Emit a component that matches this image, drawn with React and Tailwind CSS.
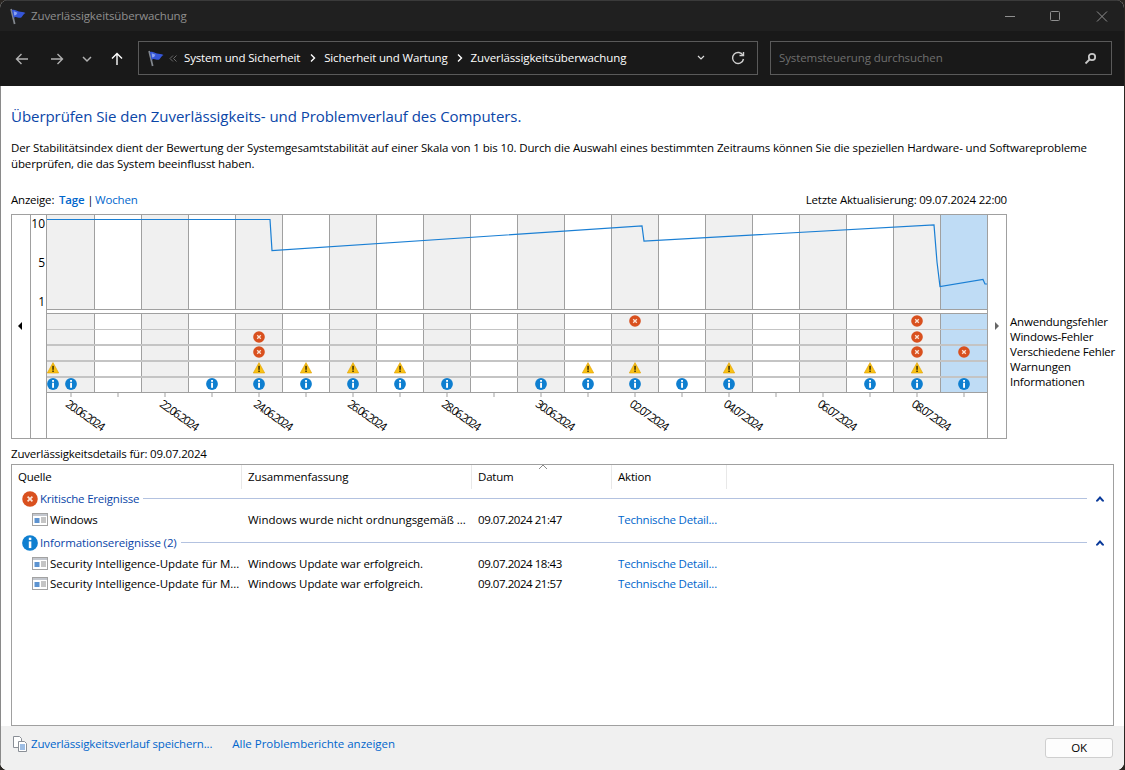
import React from "react";

const F = { fontFamily: '"Open Sans","Noto Sans",sans-serif' };

function Flag({ size = 18 }) {
  return (
    <svg width={size} height={size} viewBox="0 0 18 18" className="shrink-0">
      <path d="M2.2 1 L6 17" stroke="#83888f" strokeWidth="1.8" fill="none" />
      <path d="M3 2.2 C6 1 8 3 10.5 3.8 C13 4.4 15 3.8 17.5 5.2 C15.5 6.2 14.5 8 13 10 C10.5 11 8.5 9 6.5 9.5 L5 10.5 Z" fill="#3556d8" />
      <path d="M5 3.5 L9 5 L7.5 7.5 L5.5 8 Z" fill="#8aa2f2" />
    </svg>
  );
}

function Err({ size = 12 }) {
  return (
    <svg width={size} height={size} viewBox="0 0 12 12" className="block shrink-0">
      <circle cx="6" cy="6" r="5.8" fill="#d9501e" />
      <path d="M4.2 4.2 L7.8 7.8 M7.8 4.2 L4.2 7.8" stroke="#fbe3d6" strokeWidth="1.3" />
    </svg>
  );
}
function Warn() {
  return (
    <svg width="12" height="12" viewBox="0 0 12 12" className="block">
      <path d="M6 .6 L11.7 11 L.3 11 Z" fill="#f9c215" stroke="#e0a000" strokeWidth=".6" strokeLinejoin="round" />
      <rect x="5.3" y="3.8" width="1.5" height="4" fill="#3a2c00" />
      <rect x="5.3" y="8.5" width="1.5" height="1.5" fill="#3a2c00" />
    </svg>
  );
}
function Info({ size = 12 }) {
  return (
    <svg width={size} height={size} viewBox="0 0 12 12" className="block shrink-0">
      <circle cx="6" cy="6" r="5.9" fill="#0f7fd0" />
      <rect x="5.1" y="4.8" width="1.9" height="5" fill="#fff" />
      <rect x="5.1" y="2" width="1.9" height="1.8" fill="#fff" />
    </svg>
  );
}
function RowIcon() {
  return (
    <svg width="16" height="13" viewBox="0 0 16 13" className="block shrink-0">
      <rect x=".5" y=".5" width="15" height="12" fill="#fff" stroke="#a2a2a2" />
      <rect x="1" y="1" width="14" height="2" fill="#c3c7ce" />
      <rect x="2.5" y="5" width="5" height="5" fill="#5d93d0" />
      <path d="M9 5h5M9 7h5M9 9h5" stroke="#8a8a8a" />
    </svg>
  );
}

const COLS = Array.from({ length: 20 }, (_, i) => i);
const err1 = [12, 18];
const err2 = [4, 18];
const err3 = [4, 18, 19];
const warn = [4, 5, 6, 7, 11, 12, 14, 17, 18];
const info = [0, 3, 4, 5, 6, 7, 8, 10, 11, 12, 13, 14, 17, 18, 19];
const dates = [
  [0, "20.06.2024"], [2, "22.06.2024"], [4, "24.06.2024"], [6, "26.06.2024"], [8, "28.06.2024"],
  [10, "30.06.2024"], [12, "02.07.2024"], [14, "04.07.2024"], [16, "06.07.2024"], [18, "08.07.2024"],
];

function colBg(i) {
  if (i === 19) return "bg-[#bfdcf5]";
  return i % 2 === 0 ? "bg-[#f0f0f0]" : "bg-white";
}
function colW(i) {
  if (i === 0) return "w-[48px] border-r border-[#a0a0a0]";
  if (i === 19) return "w-[46px]";
  return "w-[47px] border-r border-[#a0a0a0]";
}

function MarkRow({ cols, Icon, extra }) {
  return (
    <div className="flex h-[15.75px] relative">
      {COLS.map((i) => (
        <div key={i} className="w-[47px] flex items-center justify-center">
          {cols.includes(i) ? <Icon /> : null}
        </div>
      ))}
      {extra ? <div className="absolute left-0 top-1/2 -translate-y-1/2"><Icon /></div> : null}
    </div>
  );
}

function Chart() {
  return (
    <div className="ml-[11px] w-[996px] shrink-0 h-[225px] border border-[#a0a0a0] flex text-black">
      <div className="w-[19px] border-r border-[#a0a0a0] flex items-center justify-center pr-[3px] pb-[2px] shrink-0">
        <span className="w-0 h-0 border-y-[4px] border-y-transparent border-r-[4px] border-r-black" />
      </div>
      <div className="w-[16px] shrink-0 border-r border-[#a0a0a0] flex flex-col items-end pr-[1px] pt-[1px] text-[12px] leading-[16px] tracking-normal">
        <div className="h-[39px]">10</div>
        <div className="h-[39px]">5</div>
        <div>1</div>
      </div>
      <div className="w-[940px] shrink-0 relative flex flex-col">
        <div className="flex h-[95px] border-b border-[#a0a0a0]">
          {COLS.map((i) => (
            <div key={i} className={`${colW(i)} ${colBg(i)}`} />
          ))}
        </div>
        <svg className="absolute left-0 top-0" width="940" height="94" viewBox="0 0 940 94">
          <polyline
            fill="none"
            stroke="#1a7fd4"
            strokeWidth="1.2"
            points="0,4.5 223,4.5 225,35.5 595,11 597,26 887,10 890,47 893,71.5 936,64.5 938,69 940,69"
          />
        </svg>
        <div className="h-[3px]" />
        <div className="relative h-[80px] border-y border-[#a0a0a0]">
          <div className="absolute inset-0 flex">
            {COLS.map((i) => (
              <div key={i} className={`h-full ${colW(i)} ${colBg(i)}`} />
            ))}
          </div>
          <div className="absolute inset-0 flex flex-col">
            <div className="h-[16px] border-b border-[#c4c4c4]" />
            <div className="h-[16px] border-b-2 border-[#c4c4c4]" />
            <div className="h-[16px] border-b-2 border-[#c4c4c4]" />
            <div className="h-[16px] border-b-2 border-[#c4c4c4]" />
          </div>
          <div className="relative flex flex-col -mt-[1px]">
            <MarkRow cols={err1} Icon={Err} />
            <MarkRow cols={err2} Icon={Err} />
            <MarkRow cols={err3} Icon={Err} />
            <MarkRow cols={warn} Icon={Warn} extra />
            <MarkRow cols={info} Icon={Info} extra />
          </div>
        </div>
        <div className="flex h-[4px]">
          {COLS.map((i) => (
            <div key={i} className="w-[47px] flex justify-center">
              <div className="w-[2px] h-full bg-[#d0d0d0]" />
            </div>
          ))}
        </div>
        <div className="flex flex-1">
          {COLS.map((i) => {
            const d = dates.find((x) => x[0] === i);
            return (
              <div key={i} className="w-[47px] h-[30px] flex justify-center pt-[11px]">
                {d ? (
                  <span className="block whitespace-nowrap rotate-[35deg] translate-x-[14px] tracking-[-1.5px] text-[11.5px] leading-[14px] h-[14px]">
                    {d[1]}
                  </span>
                ) : null}
              </div>
            );
          })}
        </div>
      </div>
      <div className="w-[19px] shrink-0 border-l border-[#a0a0a0] flex items-center justify-center pb-[2px]">
        <span className="w-0 h-0 border-y-[4px] border-y-transparent border-l-[4px] border-l-[#666]" />
      </div>
    </div>
  );
}

function Chevron() {
  return (
    <svg width="8" height="6" viewBox="0 0 8 6" className="mr-[9px] shrink-0" fill="#0a3a9a">
      <path d="M4 0L8 4.5V5.5H6.2L4 3L1.8 5.5H0V4.5Z" />
    </svg>
  );
}

export default function App() {
  return (
    <div className="w-[1125px] h-[770px] bg-[#2a2622] overflow-hidden text-[11.5px] tracking-[-0.2px]" style={F}>
      <div className="w-[1124px] h-[770px] rounded-[8px] overflow-hidden flex flex-col bg-white relative">
        <div className="h-[31px] bg-[#202020] shrink-0 flex items-center pl-[9px] text-[#8f8f8f] border-t border-[#3a3a3a]">
          <Flag size={17} />
          <span className="ml-[5px] tracking-[-0.1px]">Zuverlässigkeitsüberwachung</span>
          <div className="ml-auto flex items-center">
            <svg width="46" height="30" viewBox="0 0 46 30"><path d="M19 15.5h10" stroke="#8f8f8f" /></svg>
            <svg width="46" height="30" viewBox="0 0 46 30"><rect x="18.5" y="10.5" width="9" height="9" rx="1" fill="none" stroke="#8f8f8f" /></svg>
            <svg width="46" height="30" viewBox="0 0 46 30"><path d="M19 10.5l10 10M29 10.5l-10 10" stroke="#8f8f8f" /></svg>
          </div>
        </div>
        <div className="h-[55px] bg-[#191919] shrink-0 flex items-center text-white">
          <div className="w-[138px] shrink-0 flex items-center h-full">
            <svg className="ml-[15px]" width="14" height="14" viewBox="0 0 14 14" fill="none" stroke="#b0b0b0" strokeWidth="1.4"><path d="M13 7H1.5M6.5 2l-5 5 5 5" /></svg>
            <svg className="ml-[21px]" width="14" height="14" viewBox="0 0 14 14" fill="none" stroke="#b0b0b0" strokeWidth="1.4"><path d="M1 7h11.5M7.5 2l5 5-5 5" /></svg>
            <svg className="ml-[18px]" width="10" height="10" viewBox="0 0 10 10" fill="none" stroke="#b0b0b0" strokeWidth="1.5"><path d="M1 3l4 4 4-4" /></svg>
            <svg className="ml-[18px]" width="14" height="14" viewBox="0 0 14 14" fill="none" stroke="#fff" strokeWidth="1.4"><path d="M7 13V1.5M2 6.5l5-5 5 5" /></svg>
          </div>
          <div className="w-[620px] h-[34px] border border-[#5a5a5a] flex items-center pl-[8px] shrink-0 mb-[1px]">
            <Flag size={17} />
            <svg className="ml-[5px] mr-[7px]" width="8" height="7" viewBox="0 0 8 7" fill="none" stroke="#6a6a6a"><path d="M4 .5L1 3.5l3 3M7.5 .5l-3 3 3 3" /></svg>
            <span className="font-medium tracking-[-0.15px]">System und Sicherheit</span>
            <svg className="ml-[10px] mr-[8px]" width="6" height="8" viewBox="0 0 6 8" fill="none" stroke="#fff" strokeWidth="1.4"><path d="M1 .5L4.5 4 1 7.5" /></svg>
            <span className="font-medium tracking-[-0.15px]">Sicherheit und Wartung</span>
            <svg className="ml-[9px] mr-[8px]" width="6" height="8" viewBox="0 0 6 8" fill="none" stroke="#fff" strokeWidth="1.4"><path d="M1 .5L4.5 4 1 7.5" /></svg>
            <span className="font-medium tracking-[-0.1px]">Zuverlässigkeitsüberwachung</span>
            <svg className="ml-auto" width="8" height="6" viewBox="0 0 8 6" fill="none" stroke="#ddd" strokeWidth="1.2"><path d="M1 1l3 3 3-3" /></svg>
            <svg className="ml-[26px] mr-[12px]" width="14" height="14" viewBox="0 0 14 14" fill="none" stroke="#d0d0d0" strokeWidth="1.4"><path d="M12 4.5A5.5 5.5 0 1 0 12.5 8" /><path d="M8.5 4.5H12.5V1" /></svg>
          </div>
          <div className="w-[342px] h-[34px] border border-[#5a5a5a] flex items-center pl-[8px] pr-[14px] ml-[12px] text-[#6f6f6f] mb-[1px] tracking-[-0.1px]">
            <span>Systemsteuerung durchsuchen</span>
            <svg className="ml-auto" width="13" height="13" viewBox="0 0 13 13" fill="none" stroke="#c8c8c8" strokeWidth="1.8"><circle cx="8" cy="5" r="3.2" /><path d="M5.5 7.5L1.5 11.5" /></svg>
          </div>
        </div>

        <div className="flex-1 bg-white flex flex-col min-h-0 border-l border-[#8a8a8a]">
          <div className="text-[15px] leading-[20px] tracking-[-0.05px] text-[#0a46a8] pl-[10px] pt-[20px] h-[50px] shrink-0">
            Überprüfen Sie den Zuverlässigkeits- und Problemverlauf des Computers.
          </div>
          <p className="leading-[16px] tracking-[-0.13px] text-black pl-[10px] pr-[30px] pt-[4px] h-[53px] shrink-0">
            Der Stabilitätsindex dient der Bewertung der Systemgesamtstabilität auf einer Skala von 1 bis 10. Durch die Auswahl eines bestimmten Zeitraums können Sie die speziellen Hardware- und Softwareprobleme überprüfen, die das System beeinflusst haben.
          </p>
          <div className="flex items-start justify-between pl-[10px] pt-[3px] w-[1006px] leading-[16px] h-[25px] shrink-0 text-black">
            <div>
              Anzeige: <span className="font-semibold text-[#0066cc] ml-[2px]">Tage</span> | <span className="text-[#0066cc] -ml-[1px]">Wochen</span>
            </div>
            <div>Letzte Aktualisierung: 09.07.2024 22:00</div>
          </div>
          <div className="flex -ml-px shrink-0">
            <Chart />
            <div className="ml-[3px] mt-[100px] leading-[15px] text-black whitespace-nowrap">
              <div>Anwendungsfehler</div>
              <div>Windows-Fehler</div>
              <div>Verschiedene Fehler</div>
              <div>Warnungen</div>
              <div>Informationen</div>
            </div>
          </div>
          <div className="leading-[16px] pl-[10px] pt-[7px] h-[25px] shrink-0 text-black">
            Zuverlässigkeitsdetails für: 09.07.2024
          </div>
          <div className="ml-[10px] w-[1103px] flex-1 border border-[#a0a0a0] text-black flex flex-col min-h-0">
            <div className="flex h-[24px] items-center shrink-0">
              <div className="w-[230px] pl-[6px] h-full flex items-center border-r border-[#e8e8e8]">Quelle</div>
              <div className="w-[230px] pl-[6px] h-full flex items-center border-r border-[#e8e8e8] tracking-[-0.1px]">Zusammenfassung</div>
              <div className="w-[140px] pl-[6px] h-full flex items-center border-r border-[#e8e8e8] relative">
                Datum
                <svg className="absolute left-[66px] -top-[1px]" width="10" height="6" viewBox="0 0 10 6" fill="none" stroke="#8a8a8a"><path d="M1 5l4-4 4 4" /></svg>
              </div>
              <div className="w-[115px] pl-[6px] h-full flex items-center border-r border-[#e8e8e8]">Aktion</div>
            </div>
            <div className="flex items-center h-[19px] pl-[10px] shrink-0">
              <Err size={16} />
              <span className="ml-[2px] text-[#0a46a8]">Kritische Ereignisse</span>
              <div className="h-px bg-[#b3c2e0] flex-1 ml-[4px] mr-[9px]" />
              <Chevron />
            </div>
            <div className="flex items-center h-[21px] mt-[1px] shrink-0">
              <div className="w-[230px] flex items-center pl-[20px]"><RowIcon /><span className="ml-[2px]">Windows</span></div>
              <div className="w-[230px] pl-[6px] whitespace-nowrap tracking-[-0.04px]">Windows wurde nicht ordnungsgemäß ...</div>
              <div className="w-[140px] pl-[6px] tracking-[-0.45px]">09.07.2024 21:47</div>
              <div className="pl-[6px] text-[#0066cc]">Technische Detail...</div>
            </div>
            <div className="flex items-center h-[19px] mt-[3px] pl-[10px] mb-[1px] shrink-0">
              <Info size={16} />
              <span className="ml-[2px] text-[#0a46a8] tracking-[-0.12px]">Informationsereignisse (2)</span>
              <div className="h-px bg-[#b3c2e0] flex-1 ml-[4px] mr-[9px]" />
              <Chevron />
            </div>
            {["18:43", "21:57"].map((t) => (
              <div key={t} className="flex items-center h-[20.5px] shrink-0">
                <div className="w-[230px] flex items-center pl-[20px]"><RowIcon /><span className="ml-[2px] whitespace-nowrap tracking-[-0.05px]">Security Intelligence-Update für M...</span></div>
                <div className="w-[230px] pl-[6px] tracking-[-0.1px]">Windows Update war erfolgreich.</div>
                <div className="w-[140px] pl-[6px] tracking-[-0.45px]">09.07.2024 {t}</div>
                <div className="pl-[6px] text-[#0066cc]">Technische Detail...</div>
              </div>
            ))}
          </div>
          <div className="h-[44px] shrink-0 bg-[#f0f0f0] flex items-start pl-[11px] text-[#0066cc]">
            <div className="flex items-center h-[36px]">
              <svg width="16" height="16" viewBox="0 0 16 16" fill="#fff" stroke="#8a8f96">
                <path d="M1.5 .5h6l2 2v9h-8z" />
                <path d="M6.5 5.5h6l2 2v8h-8z" />
                <path d="M8 9h5M8 11h5M8 13h5" stroke="#3d7cc9" />
              </svg>
              <span className="ml-[3px] tracking-[-0.15px]">Zuverlässigkeitsverlauf speichern...</span>
              <span className="ml-[20px] tracking-[-0.02px]">Alle Problemberichte anzeigen</span>
            </div>
            <button className="ml-auto mr-[11px] mt-[12px] w-[68px] h-[20px] bg-[#fdfdfd] border border-[#cfcfcf] rounded-[3px] text-black leading-none">OK</button>
          </div>
        </div>
      </div>
    </div>
  );
}
